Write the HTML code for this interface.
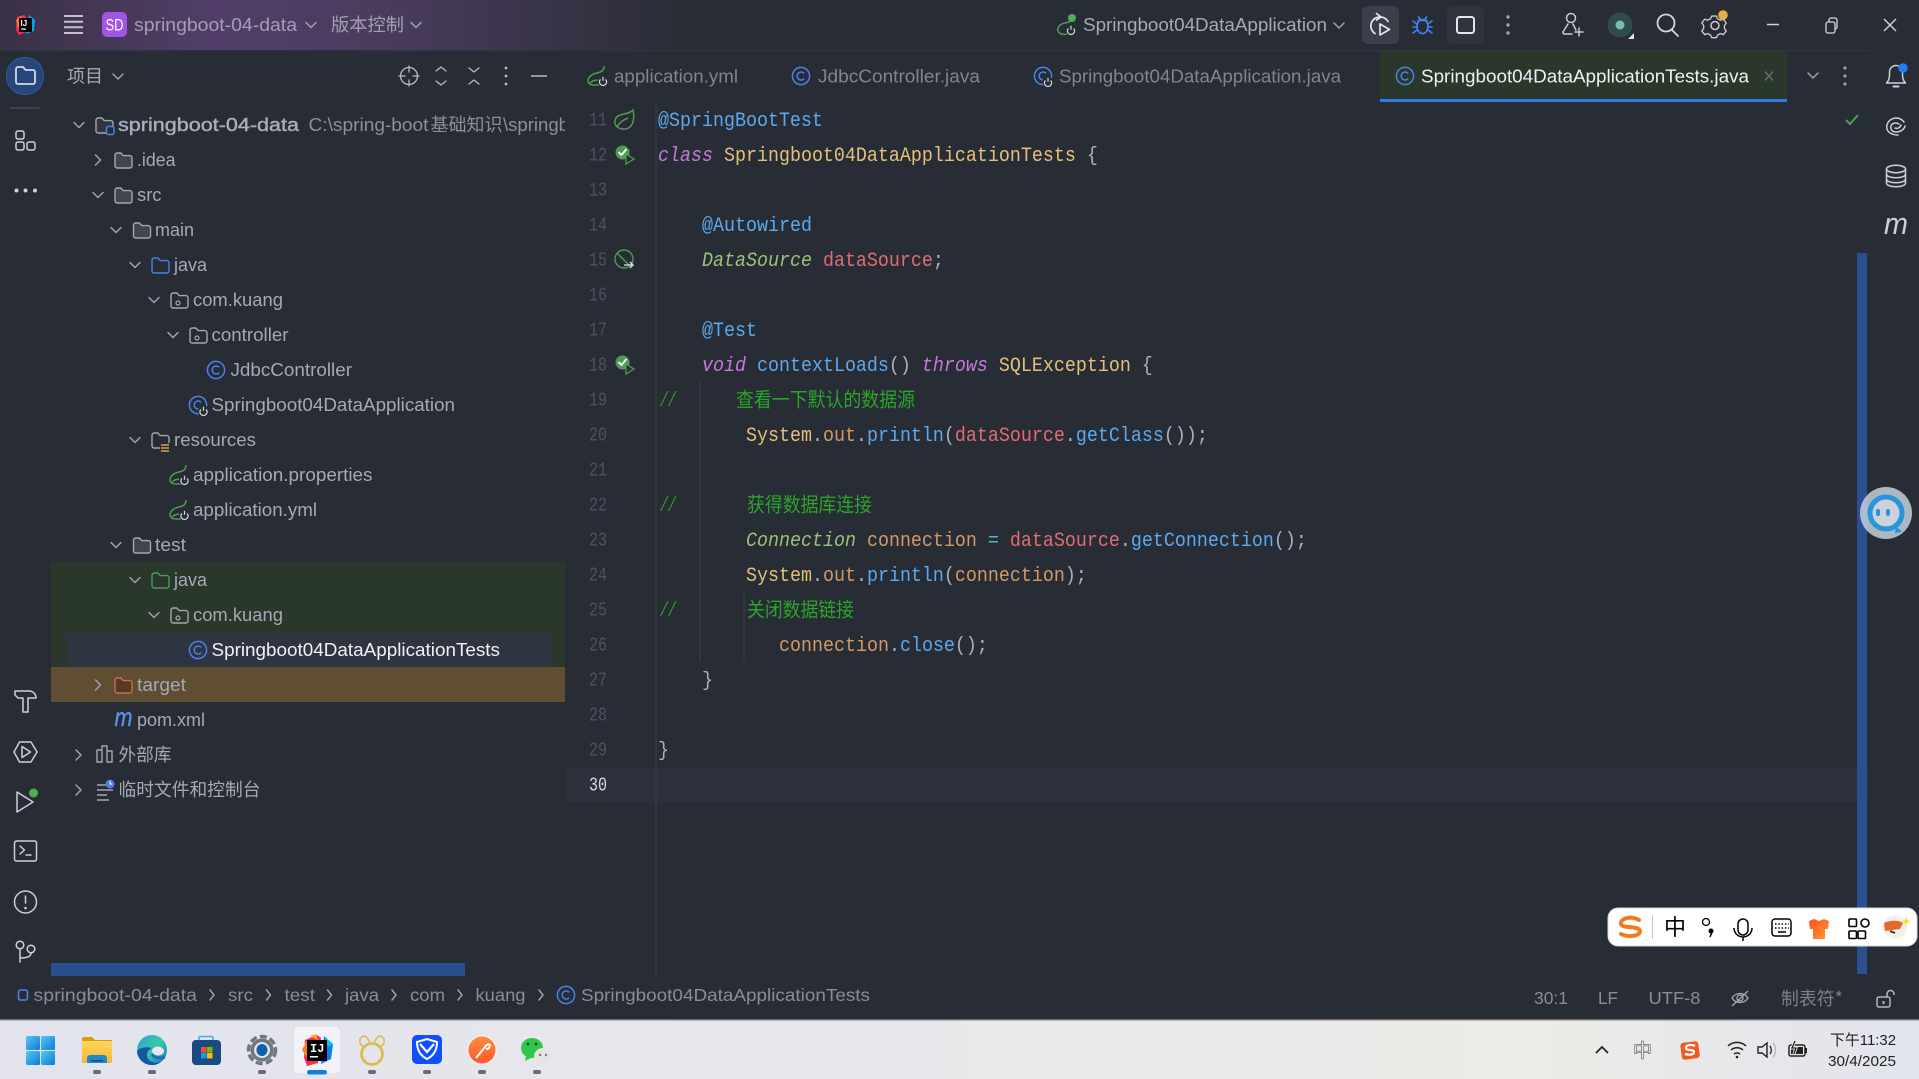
<!DOCTYPE html>
<html lang="zh"><head><meta charset="utf-8"><title>springboot-04-data</title>
<style>
html,body{margin:0;padding:0;background:#282c34;overflow:hidden}
svg{display:block}
text{white-space:pre;font-family:"Liberation Sans","Noto Sans CJK SC",sans-serif}
.t{font-size:18px;fill:#a3a9b6}
.ti{font-size:18px;fill:#a39fb2}
.tab{font-size:18px;fill:#7f8591}
.cj{font-family:"Noto Sans CJK SC",sans-serif;font-size:18px;fill:#a3a9b6}
.n{font-family:"Liberation Mono",monospace;font-size:19px;fill:#4b5263}
.code text{font-family:"Liberation Mono",monospace;font-size:20px;fill:#abb2bf}
.b{fill:#5ca9ed}.p{fill:#c678dd;font-style:italic}.y{fill:#e5c07b}.r{fill:#e06c75}.g{fill:#98c379;font-style:italic}.o{fill:#d19a66}.h{fill:#56b6c2}
.c{font-family:"Noto Sans CJK SC",sans-serif;font-size:20px;fill:#2aa52a}
.sl{font-family:"Liberation Mono",monospace;font-size:20px;font-style:italic;fill:#2aa52a}
.st{font-size:17.5px;fill:#868d9b}
.s{fill:none;stroke:#ced0d6;stroke-width:1.5;stroke-linecap:round;stroke-linejoin:round}
.ch{fill:none;stroke:#9da2ad;stroke-width:1.5;stroke-linecap:round;stroke-linejoin:round}
</style></head><body>
<svg xmlns="http://www.w3.org/2000/svg" width="1919" height="1079" viewBox="0 0 1919 1079">
<defs>
<linearGradient id="tg" x1="0" x2="1" y1="0" y2="0"><stop offset="0" stop-color="#3a3145"/><stop offset=".3" stop-color="#503e68"/><stop offset=".55" stop-color="#4a3b5e"/><stop offset="1" stop-color="#282c34"/></linearGradient>
<linearGradient id="bar" x1="0" x2="1" y1="0" y2="0"><stop offset="0" stop-color="#e2e3ec"/><stop offset=".45" stop-color="#e8e8ec"/><stop offset=".8" stop-color="#ecebe6"/><stop offset="1" stop-color="#e2e4ee"/></linearGradient>
<linearGradient id="win" x1="0" x2="1" y1="0" y2="1"><stop offset="0" stop-color="#56c8f8"/><stop offset="1" stop-color="#0f78d8"/></linearGradient>
<linearGradient id="fold" x1="0" x2="0" y1="0" y2="1"><stop offset="0" stop-color="#ffd75e"/><stop offset="1" stop-color="#f8b82e"/></linearGradient>
<linearGradient id="edge" x1="0" x2="1" y1="0" y2="1"><stop offset="0" stop-color="#2f9fd8"/><stop offset=".5" stop-color="#38c8a8"/><stop offset="1" stop-color="#1a70c0"/></linearGradient>
<linearGradient id="post" x1="0" x2="0" y1="0" y2="1"><stop offset="0" stop-color="#ff8a40"/><stop offset="1" stop-color="#fb5a28"/></linearGradient>
<linearGradient id="shirt" x1="0" x2="1" y1="0" y2="1"><stop offset="0" stop-color="#ff5020"/><stop offset="1" stop-color="#ff9a30"/></linearGradient>
<path id="fo" d="M1 3.2A2.2 2.2 0 0 1 3.2 1h3.6l2.4 2.600h6.600A2.2 2.2 0 0 1 18 5.800v8A2.2 2.2 0 0 1 15.800 16H3.2A2.2 2.2 0 0 1 1 13.800z"/>
<g id="cl" fill="none" stroke="#4a80e8" stroke-width="1.5"><circle r="8.6"/><path d="M3.2 -2.6a4 4 0 1 0 0 5.2"/></g>
<g id="pw"><circle r="5.5" fill="#282c34"/><path d="M-2.6 -1.6a3.6 3.6 0 1 0 5.2 0M0 -4.2V-.2" stroke="#d5d8de" fill="none" stroke-width="1.2"/></g>
<path id="lf" fill="none" stroke="#4f9a55" stroke-width="1.5" d="M7 -10C7 -5 4 -4 0 -3C-5 -2 -9 1 -9 5C-9 8 -6 9 -3 9H2M-7 7C-4 4 0 4 3 4"/>
</defs>

<rect width="1919" height="1079" fill="#282c34"/>

<!-- title bar -->
<rect width="700" height="50" fill="url(#tg)"/>
<rect y="50" width="1870" height="1" fill="#303540"/>
<g>
<path d="M17 17l7-2 3 3-1 14-7 3-3-5z" fill="#fe2857"/><path d="M16 20l5-4 3 6-6 6z" fill="#fc801d"/><path d="M29 15l6 5-1 11-8 3z" fill="#07a3f2"/>
<rect x="19" y="18" width="13" height="14" fill="#000"/><text x="20.500" y="26" style="font-size:8px;font-weight:bold;fill:#fff">IJ</text><rect x="21" y="28.500" width="5" height="1.200" fill="#fff"/>
</g>
<path d="M64 16H83M64 21.700H83M64 27.300H83M64 33H83" stroke="#c4c0cc" stroke-width="2"/>
<rect x="102" y="12" width="25" height="25" rx="5" fill="#a155e0"/>
<text x="105.500" y="30.500" textLength="18" lengthAdjust="spacingAndGlyphs" style="font-size:17px;fill:#fff">SD</text>
<text class="ti" x="134" y="31" textLength="163" lengthAdjust="spacingAndGlyphs">springboot-04-data</text>
<path class="ch" d="M306 22.500l5 5 5-5M411 22.500l5 5 5-5"/>
<text class="cj" x="331" y="31" textLength="73" lengthAdjust="spacingAndGlyphs" style="fill:#a39fb2">版本控制</text>

<!-- run config -->
<path d="M1073 18C1072 22 1068 22 1065 23C1060 24 1057 27 1058 31C1059 34 1063 35 1067 34" fill="none" stroke="#4f9a55" stroke-width="1.5"/>
<circle cx="1072" cy="18" r="4" fill="#4caf50"/>
<use href="#pw" x="1071" y="30"/>
<text class="t" x="1083" y="31" textLength="244" lengthAdjust="spacingAndGlyphs">Springboot04DataApplication</text>
<path class="ch" d="M1334 23l5 5 5-5"/>
<rect x="1362" y="6" width="37" height="38" rx="6" fill="#3a3f4b"/>
<g fill="none" stroke="#e3e5ea" stroke-width="1.700" stroke-linecap="round" stroke-linejoin="round"><path d="M1381 17A9 9 0 0 0 1375 33.500M1381 17a9 9 0 0 1 7 4.500M1376.500 13.500l4.500 3.500-4.500 3"/><path d="M1380 24l9.500 5.500-9.500 5.500z"/></g>
<g fill="none" stroke="#3b86f5" stroke-width="1.600" stroke-linecap="round"><ellipse cx="1422.500" cy="26.500" rx="5.500" ry="7"/><path d="M1418.500 17l2 3M1426.500 17l-2 3M1418 20.500h9M1413 21l4 3M1432 21l-4 3M1413 27h4M1432 27h-4M1413 33l4-3M1432 33l-4-3"/></g>
<rect x="1447" y="6" width="37" height="38" rx="6" fill="#2f343f"/>
<rect x="1457" y="17" width="17" height="16" rx="2.500" fill="none" stroke="#e3e5ea" stroke-width="2"/>
<g fill="#9da2ad"><circle cx="1508" cy="17" r="1.700"/><circle cx="1508" cy="25" r="1.700"/><circle cx="1508" cy="33" r="1.700"/></g>
<g class="s" style="stroke:#c9ccd2"><circle cx="1571" cy="18" r="4.500"/><path d="M1573 24l3 6M1568 24l-5 8a2 2 0 0 0 1 2h8"/><path d="M1579 28v8M1575 32h8"/></g>
<circle cx="1620" cy="25" r="12.500" fill="#2f4b4e"/><circle cx="1620" cy="25" r="4.500" fill="#74c0b0"/><path d="M1634 33v6h-6z" fill="#dfe1e5"/>
<g class="s" style="stroke:#d5d7dc;stroke-width:1.800"><circle cx="1666" cy="23" r="8.500"/><path d="M1672 30l6 6"/></g>
<g fill="none" stroke="#c9ccd2" stroke-width="1.500"><path d="M1712 15l5 0 1.500 3 3 1.500 3.500-1 3 4-2 3v3l2 3-3 4-3.500-1-3 1.500-1.500 3h-5l-1.500-3-3-1.500-3.500 1-3-4 2-3v-3l-2-3 3-4 3.500 1 3-1.500z" transform="translate(171 2.600) scale(.9)"/><circle cx="1715" cy="25.500" r="4"/></g>
<circle cx="1723" cy="15" r="4.800" fill="#e8b040"/>
<path d="M1767 24.500h12" stroke="#d5d7dc" stroke-width="1.500"/>
<g fill="none" stroke="#d5d7dc" stroke-width="1.300"><rect x="1826" y="22" width="9" height="11" rx="2"/><path d="M1829 22v-2a2 2 0 0 1 2-2h4a2 2 0 0 1 2 2v7a2 2 0 0 1-2 2"/></g>
<path d="M1884 19l12 12M1896 19l-12 12" stroke="#d5d7dc" stroke-width="1.400"/>

<!-- left stripe -->
<rect x="6.500" y="57.500" width="37" height="37" rx="18" fill="#26467c" stroke="#2f5a9e"/>
<g transform="translate(15 66)" fill="none" stroke="#d5d9e0" stroke-width="1.800"><path d="M1 3A2 2 0 0 1 3 1h5l2.500 3H18a2 2 0 0 1 2 2v10a2 2 0 0 1-2 2H3a2 2 0 0 1-2-2z"/></g>
<rect x="10" y="107" width="30" height="2" rx="1" fill="#3d424d"/>
<g class="s"><rect x="16" y="131" width="8" height="8" rx="2"/><rect x="16" y="142" width="8" height="8" rx="2"/><rect x="27" y="142" width="8" height="8" rx="2"/></g>
<g fill="#ced0d6"><circle cx="16.500" cy="190.500" r="2"/><circle cx="25.500" cy="190.500" r="2"/><circle cx="35" cy="190.500" r="2"/></g>
<g class="s"><path d="M15 691H29C33 691 36 694 36 698H28V712H23V698H18L15 695z"/></g>
<g class="s"><path d="M14 752L19.500 742H31L37 752L31 762H19.500z"/><path d="M22 746.500L30.500 752L22 757.500z"/></g>
<g class="s"><path d="M17 792L33 802L17 812z"/></g><circle cx="33.500" cy="793" r="4.500" fill="#4caf50"/>
<g class="s"><rect x="14.500" y="841" width="22" height="20" rx="2"/><path d="M20 846l4.500 4-4.500 4M26 855h5"/></g>
<g class="s"><circle cx="25.500" cy="902" r="11"/><path d="M25.500 896v7"/></g><circle cx="25.500" cy="908" r="1.300" fill="#ced0d6"/>
<g class="s"><circle cx="20" cy="945" r="3.800"/><circle cx="31" cy="949" r="3.800"/><path d="M20 949v13M31 953c0 4-5 5-11 5"/></g>

<!-- project panel header -->
<text class="cj" x="67" y="82.500" textLength="36" lengthAdjust="spacingAndGlyphs">项目</text>
<path class="ch" d="M113 74l5 5 5-5"/>
<g class="s" style="stroke:#b8bbc2;stroke-width:1.300"><circle cx="409" cy="76" r="8.500"/><path d="M409 66v6M409 80v6M399 76h6M413 76h6"/></g>
<path class="s" style="stroke:#b8bbc2;stroke-width:1.300" d="M436 71l5-4 5 4M436 81l5 4 5-4"/>
<path class="s" style="stroke:#b8bbc2;stroke-width:1.300" d="M469 68l5 4 5-4M469 84l5-4 5 4"/>
<g fill="#b8bbc2"><circle cx="506" cy="68" r="1.400"/><circle cx="506" cy="76" r="1.400"/><circle cx="506" cy="84" r="1.400"/></g>
<path d="M531 76h16" stroke="#b8bbc2" stroke-width="1.500"/>

<!-- tree highlights -->
<rect x="51" y="562" width="514" height="105" fill="#29382b"/>
<rect x="66.500" y="633" width="484" height="34" rx="5" fill="#2f3441"/>
<rect x="51" y="667" width="514" height="35" fill="#5f4e32"/>

<!-- chevrons -->
<g class="ch">
<path d="M74 122.500l5 5 5-5"/>
<path d="M95.500 155l5 5-5 5"/>
<path d="M93 192.500l5 5 5-5"/>
<path d="M111 227.500l5 5 5-5"/>
<path d="M130 262.500l5 5 5-5"/>
<path d="M149 297.500l5 5 5-5"/>
<path d="M168 332.500l5 5 5-5"/>
<path d="M130 437.500l5 5 5-5"/>
<path d="M111 542.500l5 5 5-5"/>
<path d="M130 577.500l5 5 5-5"/>
<path d="M149 612.500l5 5 5-5"/>
<path d="M95.500 680l5 5-5 5"/>
<path d="M76 750l5 5-5 5"/>
<path d="M76 785l5 5-5 5"/>
</g>

<!-- tree icons -->
<g fill="#43454a" stroke="#a4a7ae" stroke-width="1.400">
<use href="#fo" x="95" y="117" fill="#32353c"/>
<use href="#fo" x="114" y="152"/>
<use href="#fo" x="114" y="187"/>
<use href="#fo" x="132.500" y="222"/>
<use href="#fo" x="151" y="257" fill="none" stroke="#4a80e8"/>
<use href="#fo" x="170" y="292" fill="none"/>
<use href="#fo" x="189" y="327" fill="none"/>
<use href="#fo" x="151" y="432" fill="none"/>
<use href="#fo" x="132.500" y="537"/>
<use href="#fo" x="151" y="572" fill="none" stroke="#4f9a55"/>
<use href="#fo" x="170" y="607" fill="none"/>
<use href="#fo" x="114" y="677" fill="#5a3828" stroke="#c4714d"/>
</g>
<rect x="106.500" y="126.500" width="7.500" height="8" rx="2" fill="#282c34" stroke="#4a80e8" stroke-width="1.500"/>
<g fill="none" stroke="#a4a7ae" stroke-width="1.200"><circle cx="178" cy="303" r="2"/><circle cx="197" cy="338" r="2"/><circle cx="178" cy="618" r="2"/></g>
<rect x="160" y="443" width="10" height="9" fill="#282c34"/><path d="M161 445h8M161 448h8M161 451h8" stroke="#d5a93a" stroke-width="1.500"/>
<use href="#cl" x="216" y="370"/>
<use href="#cl" x="198" y="405"/><use href="#pw" x="203.500" y="411"/>
<use href="#lf" x="179" y="475"/><use href="#pw" x="184.500" y="480"/>
<use href="#lf" x="179" y="510"/><use href="#pw" x="184.500" y="515"/>
<use href="#cl" x="198" y="650"/>
<text x="114.500" y="726" style="font-style:italic;font-size:26px;fill:#5b8ff0;stroke:#5b8ff0;stroke-width:.4" textLength="18" lengthAdjust="spacingAndGlyphs">m</text>
<g fill="none" stroke="#a4a7ae" stroke-width="1.400"><path d="M97 750h5v12h-5zM102 762V746h5v16M107 762V751h5v11z"/></g>
<path d="M97 785h10M97 790h16M97 795h10M97 800h12" stroke="#a4a7ae" stroke-width="1.500"/>
<circle cx="110" cy="784" r="4.500" fill="#4a80e8"/><path d="M110 781v3h2" stroke="#fff" fill="none"/>

<!-- tree text -->
<text class="t" x="118" y="131" textLength="181" lengthAdjust="spacingAndGlyphs" style="fill:#a8aebb;stroke:#a8aebb;stroke-width:.4">springboot-04-data</text>
<text class="t" x="308.500" y="131" textLength="120" lengthAdjust="spacingAndGlyphs" style="fill:#8a909c">C:\spring-boot</text>
<text class="cj" x="430.500" y="131" textLength="72" lengthAdjust="spacingAndGlyphs" style="fill:#8a909c">基础知识</text>
<text class="t" x="503" y="131" textLength="66" lengthAdjust="spacingAndGlyphs" style="fill:#8a909c">\springb</text>
<rect x="565" y="102" width="90" height="60" fill="#282c34"/>
<text class="t" x="137" y="166" textLength="38.500" lengthAdjust="spacingAndGlyphs">.idea</text>
<text class="t" x="137" y="201" textLength="24.500" lengthAdjust="spacingAndGlyphs">src</text>
<text class="t" x="155" y="236" textLength="39" lengthAdjust="spacingAndGlyphs">main</text>
<text class="t" x="174" y="271" textLength="33" lengthAdjust="spacingAndGlyphs">java</text>
<text class="t" x="193" y="306" textLength="90" lengthAdjust="spacingAndGlyphs">com.kuang</text>
<text class="t" x="211.500" y="341" textLength="77" lengthAdjust="spacingAndGlyphs">controller</text>
<text class="t" x="230.500" y="376" textLength="121.500" lengthAdjust="spacingAndGlyphs">JdbcController</text>
<text class="t" x="211.500" y="411" textLength="243.500" lengthAdjust="spacingAndGlyphs">Springboot04DataApplication</text>
<text class="t" x="174" y="446" textLength="82" lengthAdjust="spacingAndGlyphs">resources</text>
<text class="t" x="193" y="481" textLength="179.500" lengthAdjust="spacingAndGlyphs">application.properties</text>
<text class="t" x="193" y="516" textLength="124" lengthAdjust="spacingAndGlyphs">application.yml</text>
<text class="t" x="155" y="551" textLength="31" lengthAdjust="spacingAndGlyphs">test</text>
<text class="t" x="174" y="586" textLength="33" lengthAdjust="spacingAndGlyphs">java</text>
<text class="t" x="193" y="621" textLength="90" lengthAdjust="spacingAndGlyphs">com.kuang</text>
<text class="t" x="211.500" y="656" textLength="288.500" lengthAdjust="spacingAndGlyphs" style="fill:#eef0f4">Springboot04DataApplicationTests</text>
<text class="t" x="137" y="691" textLength="49" lengthAdjust="spacingAndGlyphs">target</text>
<text class="t" x="137" y="726" textLength="68" lengthAdjust="spacingAndGlyphs">pom.xml</text>
<text class="cj" x="118.500" y="761" textLength="53" lengthAdjust="spacingAndGlyphs">外部库</text>
<text class="cj" x="118.500" y="796" textLength="142" lengthAdjust="spacingAndGlyphs">临时文件和控制台</text>

<!-- tabs -->
<rect x="1380" y="51" width="407" height="48" fill="#29382b"/>
<rect x="1380" y="99" width="407" height="3" fill="#2d7de8"/>
<use href="#lf" x="597" y="76"/><use href="#pw" x="603" y="81"/>
<text class="tab" x="614" y="82.500" textLength="124" lengthAdjust="spacingAndGlyphs">application.yml</text>
<use href="#cl" x="801" y="76"/>
<text class="tab" x="818" y="82.500" textLength="162" lengthAdjust="spacingAndGlyphs">JdbcController.java</text>
<use href="#cl" x="1043" y="76"/><use href="#pw" x="1048" y="82"/>
<text class="tab" x="1059" y="82.500" textLength="282" lengthAdjust="spacingAndGlyphs">Springboot04DataApplication.java</text>
<use href="#cl" x="1405" y="76"/>
<text class="t" x="1421" y="82.500" textLength="328" lengthAdjust="spacingAndGlyphs" style="fill:#eef0f4">Springboot04DataApplicationTests.java</text>
<path d="M1765 71.500l8 9M1773 71.500l-8 9" stroke="#6f757f" stroke-width="1.300"/>
<path class="ch" d="M1808 73l5 5 5-5"/>
<g fill="#9da2ad"><circle cx="1845" cy="68" r="1.600"/><circle cx="1845" cy="76" r="1.600"/><circle cx="1845" cy="84" r="1.600"/></g>

<!-- right stripe -->
<g class="s"><path d="M1886.500 83h19c-2-2-3-4-3-8v-3a6.500 6.500 0 0 0-13 0v3c0 4-1 6-3 8z"/><path d="M1893.500 86.500h5" stroke-width="2"/></g>
<circle cx="1903" cy="68" r="4.700" fill="#1f7cff"/>
<g class="s"><path d="M1904 122c-3-4-8-5-12-3c-4 2-6 6-5 10c1 4 6 6 11 6M1899 124c-3-2-7-1-8 2c-1 3 1 6 5 6c4 0 8-2 9-6M1895 128c2 1 5 0 6-3"/></g>
<g class="s"><ellipse cx="1896" cy="169" rx="9.500" ry="3.700"/><path d="M1886.500 169v14c0 5 19 5 19 0v-14M1886.500 174c0 5 19 5 19 0M1886.500 179c0 5 19 5 19 0"/></g>
<text x="1884" y="234" style="font-style:italic;font-size:31px;fill:#ced0d6" textLength="24" lengthAdjust="spacingAndGlyphs">m</text>

<!-- editor -->
<rect x="565" y="767.500" width="1303" height="35" fill="#2c313c"/>
<rect x="655.500" y="102" width="1" height="873" fill="#3a3f4b"/>
<rect x="699.500" y="382" width="1" height="280" fill="#3a3f4b"/>
<rect x="743.500" y="592" width="1" height="70" fill="#3a3f4b"/>
<path d="M1846 120l4 4 8-9" fill="none" stroke="#4f9a55" stroke-width="2"/>
<g transform="translate(0 -.5)">
<text class="n" x="589" y="126" textLength="18" lengthAdjust="spacingAndGlyphs">11</text>
<text class="n" x="589" y="161" textLength="18" lengthAdjust="spacingAndGlyphs">12</text>
<text class="n" x="589" y="196" textLength="18" lengthAdjust="spacingAndGlyphs">13</text>
<text class="n" x="589" y="231" textLength="18" lengthAdjust="spacingAndGlyphs">14</text>
<text class="n" x="589" y="266" textLength="18" lengthAdjust="spacingAndGlyphs">15</text>
<text class="n" x="589" y="301" textLength="18" lengthAdjust="spacingAndGlyphs">16</text>
<text class="n" x="589" y="336" textLength="18" lengthAdjust="spacingAndGlyphs">17</text>
<text class="n" x="589" y="371" textLength="18" lengthAdjust="spacingAndGlyphs">18</text>
<text class="n" x="589" y="406" textLength="18" lengthAdjust="spacingAndGlyphs">19</text>
<text class="n" x="589" y="441" textLength="18" lengthAdjust="spacingAndGlyphs">20</text>
<text class="n" x="589" y="476" textLength="18" lengthAdjust="spacingAndGlyphs">21</text>
<text class="n" x="589" y="511" textLength="18" lengthAdjust="spacingAndGlyphs">22</text>
<text class="n" x="589" y="546" textLength="18" lengthAdjust="spacingAndGlyphs">23</text>
<text class="n" x="589" y="581" textLength="18" lengthAdjust="spacingAndGlyphs">24</text>
<text class="n" x="589" y="616" textLength="18" lengthAdjust="spacingAndGlyphs">25</text>
<text class="n" x="589" y="651" textLength="18" lengthAdjust="spacingAndGlyphs">26</text>
<text class="n" x="589" y="686" textLength="18" lengthAdjust="spacingAndGlyphs">27</text>
<text class="n" x="589" y="721" textLength="18" lengthAdjust="spacingAndGlyphs">28</text>
<text class="n" x="589" y="756" textLength="18" lengthAdjust="spacingAndGlyphs">29</text>
<text class="n" x="589" y="791" textLength="18" lengthAdjust="spacingAndGlyphs" style="fill:#d5d8de">30</text>
</g>

<!-- gutter icons -->
<g fill="none" stroke="#4f9a55" stroke-width="1.500">
<path d="M633 110C635 119 633 129 624 129C616 129 613 123 616 118C619 113 629 115 633 110zM617 127C620 122 623 120 628 118"/>
</g>
<circle cx="622.500" cy="152.500" r="7" fill="#4f9a55"/><path d="M618.500 152l3 3 5-6" fill="none" stroke="#fff" stroke-width="1.800"/>
<path d="M626 154l8 5-8 5z" fill="#282c34" stroke="#4f9a55" stroke-width="1.300"/>
<circle cx="622.500" cy="362.500" r="7" fill="#4f9a55"/><path d="M618.500 362l3 3 5-6" fill="none" stroke="#fff" stroke-width="1.800"/>
<path d="M626 364l8 5-8 5z" fill="#282c34" stroke="#4f9a55" stroke-width="1.300"/>
<g fill="none" stroke="#4f9a55" stroke-width="1.400"><circle cx="624" cy="259" r="9"/><path d="M617 253l13 13"/></g>
<path d="M624 265h9M630 262l3 3-3 3" fill="none" stroke="#e3e5ea" stroke-width="1.300"/>

<!-- code -->
<g class="code" transform="translate(658 0) scale(.9167 1)">
<text x="0" y="126" style="fill:#5ca9ed">@SpringBootTest</text>
<text x="0" y="161"><tspan class="p">class</tspan> <tspan class="y">Springboot04DataApplicationTests</tspan> {</text>
<text x="48" y="231" style="fill:#5ca9ed">@Autowired</text>
<text x="48" y="266"><tspan class="g">DataSource</tspan> <tspan class="r">dataSource</tspan>;</text>
<text x="48" y="336" style="fill:#5ca9ed">@Test</text>
<text x="48" y="371"><tspan class="p">void</tspan> <tspan class="b">contextLoads</tspan>() <tspan class="p">throws</tspan> <tspan class="y">SQLException</tspan> {</text>
<text x="96" y="441"><tspan class="y">System</tspan>.<tspan class="o">out</tspan>.<tspan class="b">println</tspan>(<tspan class="r">dataSource</tspan>.<tspan class="b">getClass</tspan>());</text>
<text x="96" y="546"><tspan class="g">Connection</tspan> <tspan class="o">connection</tspan> <tspan class="h">=</tspan> <tspan class="r">dataSource</tspan>.<tspan class="b">getConnection</tspan>();</text>
<text x="96" y="581"><tspan class="y">System</tspan>.<tspan class="o">out</tspan>.<tspan class="b">println</tspan>(<tspan class="o">connection</tspan>);</text>
<text x="132" y="651"><tspan class="o">connection</tspan>.<tspan class="b">close</tspan>();</text>
<text x="48" y="686">}</text>
<text x="0" y="756">}</text>
</g>
<text class="sl" x="660" y="406" textLength="16" lengthAdjust="spacingAndGlyphs">//</text>
<text class="sl" x="660" y="511" textLength="16" lengthAdjust="spacingAndGlyphs">//</text>
<text class="sl" x="660" y="616" textLength="16" lengthAdjust="spacingAndGlyphs">//</text>
<text class="c" x="736" y="406.500" textLength="179" lengthAdjust="spacingAndGlyphs">查看一下默认的数据源</text>
<text class="c" x="747" y="511.500" textLength="125" lengthAdjust="spacingAndGlyphs">获得数据库连接</text>
<text class="c" x="747" y="616.500" textLength="107" lengthAdjust="spacingAndGlyphs">关闭数据链接</text>

<!-- scrollbars -->
<rect x="1857" y="253" width="10" height="721" fill="#2a5091"/>
<rect x="51" y="963" width="414" height="13" fill="#28508e"/>

<!-- floating chat -->
<circle cx="1886" cy="513" r="26" fill="#c3d0dc" opacity=".85"/>
<circle cx="1886" cy="513" r="16" fill="#cdd2da" stroke="#2795dc" stroke-width="5"/>
<path d="M1896 526l6 6-7 1z" fill="#2795dc"/>
<rect x="1876" y="509" width="4" height="7" rx="2" fill="#2795dc"/><rect x="1886" y="509" width="4" height="7" rx="2" fill="#2795dc"/>

<!-- status bar -->
<rect x="18.500" y="990" width="9" height="10" rx="2" fill="none" stroke="#4a80e8" stroke-width="1.600"/>
<text class="st" x="33.500" y="1001" textLength="163.500" lengthAdjust="spacingAndGlyphs">springboot-04-data</text>
<text class="st" x="228" y="1001" textLength="25" lengthAdjust="spacingAndGlyphs">src</text>
<text class="st" x="284.500" y="1001" textLength="30.500" lengthAdjust="spacingAndGlyphs">test</text>
<text class="st" x="345" y="1001" textLength="34" lengthAdjust="spacingAndGlyphs">java</text>
<text class="st" x="410" y="1001" textLength="35" lengthAdjust="spacingAndGlyphs">com</text>
<text class="st" x="475.500" y="1001" textLength="50" lengthAdjust="spacingAndGlyphs">kuang</text>
<text class="st" x="581" y="1001" textLength="289" lengthAdjust="spacingAndGlyphs">Springboot04DataApplicationTests</text>
<g class="ch"><path d="M210 990l4 5-4 5M266.500 990l4 5-4 5M327.500 990l4 5-4 5M392 990l4 5-4 5M458 990l4 5-4 5M539 990l4 5-4 5"/></g>
<use href="#cl" x="566" y="995"/>
<text class="st" x="1534" y="1004" textLength="34" lengthAdjust="spacingAndGlyphs">30:1</text>
<text class="st" x="1598" y="1004" textLength="20" lengthAdjust="spacingAndGlyphs">LF</text>
<text class="st" x="1648.500" y="1004" textLength="52" lengthAdjust="spacingAndGlyphs">UTF-8</text>
<g fill="none" stroke="#a3a9b6" stroke-width="1.300"><path d="M1732 998c4-6 12-6 16 0c-4 6-12 6-16 0zM1732 1006l16-15"/><circle cx="1740" cy="998" r="3"/></g>
<text class="cj" x="1781" y="1005" textLength="62" lengthAdjust="spacingAndGlyphs" style="fill:#7b818d">制表符*</text>
<g fill="none" stroke="#b4b9c2" stroke-width="1.500"><rect x="1877" y="997" width="13" height="10" rx="2"/><path d="M1887 997v-3a3.500 3.500 0 0 1 7 0v1"/></g>
<rect x="1882.500" y="1001" width="2" height="3" fill="#b4b9c2"/>

<!-- sogou bar -->
<rect x="1608" y="908" width="309" height="38" rx="10" fill="#fff" stroke="#d8d8d8"/>
<path d="M1639 920C1630 915 1620 919 1621 924C1622 929 1639 925 1640 931C1640 937 1627 937 1621 934" fill="none" stroke="#f07a20" stroke-width="4" stroke-linecap="round"/>
<rect x="1652" y="915" width="1" height="24" fill="#c8c8c8"/>
<text class="cj" x="1664" y="935" style="font-size:22px;fill:#000">中</text>
<circle cx="1706" cy="922" r="3.500" fill="none" stroke="#000" stroke-width="1.300"/><circle cx="1711" cy="931" r="2.500" fill="#000"/><path d="M1712 932l-2 5" stroke="#000" stroke-width="1.500"/>
<g fill="none" stroke="#000" stroke-width="1.500"><rect x="1738" y="919" width="10" height="16" rx="5"/><path d="M1734 928a9 9 0 0 0 18 0M1743 937v4"/></g>
<rect x="1772" y="919" width="19" height="17" rx="3" fill="none" stroke="#000" stroke-width="1.500"/><path d="M1775 924h14M1775 928h14" stroke="#000" stroke-width="1.600" stroke-dasharray="1.500 1.800"/><path d="M1778 932h8" stroke="#000" stroke-width="1.500"/>
<path d="M1809 921l5-2 5 2 5-2 5 2-1 8h-3v10h-12v-10h-3z" fill="url(#shirt)"/>
<g fill="none" stroke="#000" stroke-width="1.600"><rect x="1849" y="919" width="7.500" height="7.500" rx="1"/><circle cx="1865" cy="923" r="4"/><rect x="1849" y="931" width="7.500" height="7.500" rx="1"/><rect x="1858" y="931" width="7.500" height="7.500" rx="1"/></g>
<circle cx="1895" cy="927" r="12" fill="#f5f0ea"/><path d="M1884 923c6-3 15-3 19 0l-3 6-15 2z" fill="#e8682a"/><path d="M1890 931l5 2" stroke="#333" stroke-width="2"/>
<path d="M1906 917l1.500 3 3 1.500-3 1.500-1.500 3-1.500-3-3-1.500 3-1.500z" fill="#f8df50"/>

<!-- taskbar -->
<rect y="1020" width="1919" height="59" fill="url(#bar)"/>
<rect y="1019.500" width="1919" height="1.500" fill="#b5b5ba"/>
<g fill="url(#win)"><rect x="26" y="1036" width="14" height="14" rx="1.500"/><rect x="41" y="1036" width="14" height="14" rx="1.500"/><rect x="26" y="1051" width="14" height="14" rx="1.500"/><rect x="41" y="1051" width="14" height="14" rx="1.500"/></g>
<path d="M82 1040a2 2 0 0 1 2-3h8l3 3h17v4H82z" fill="#d8a008"/><rect x="82" y="1041" width="30" height="22" rx="1" fill="url(#fold)"/>
<path d="M87 1063v-5a3 3 0 0 1 3-3h14a3 3 0 0 1 3 3v5z" fill="#1f86d0"/><rect x="91" y="1060" width="12" height="1.500" fill="#0b4f90"/>
<circle cx="152" cy="1050" r="15" fill="url(#edge)"/><path d="M137 1052a15 15 0 0 0 24 10c-6 2-14 0-14-7c0-4 3-6 5-7c-7-2-14 0-15 4z" fill="#14599f"/><ellipse cx="158" cy="1051" rx="6" ry="4.500" fill="#e6e6ec"/><path d="M152 1054c2 4 8 5 13 3" stroke="#1a70c0" stroke-width="3" fill="none"/>
<path d="M199 1041v-3a1.500 1.500 0 0 1 1.500-1.500h11a1.500 1.500 0 0 1 1.500 1.500v3" fill="none" stroke="#2fb6f0" stroke-width="1.600"/>
<rect x="192" y="1040" width="29" height="25" rx="4" fill="#1b4a80"/>
<rect x="201" y="1047" width="5.500" height="5.500" fill="#f05030"/><rect x="207" y="1047" width="5.500" height="5.500" fill="#7fba00"/><rect x="201" y="1053" width="5.500" height="5.500" fill="#00a4ef"/><rect x="207" y="1053" width="5.500" height="5.500" fill="#ffb900"/>
<circle cx="262" cy="1050" r="11.500" fill="#6f7780"/><circle cx="262" cy="1050" r="13.500" fill="none" stroke="#6f7780" stroke-width="3.500" stroke-dasharray="7 3.200"/><circle cx="262" cy="1050" r="8" fill="#e4e5ec"/><ellipse cx="262" cy="1050" rx="5.500" ry="6" fill="#0f5fb0"/>

<rect x="293" y="1026" width="48" height="48" rx="5" fill="#f2f2f9" stroke="#dcdce6"/>
<path d="M305 1040l12-5 4 3-3 25-11 3-3-8z" fill="#fe2857"/><path d="M302 1050l5-10 8 10-7 9z" fill="#fc801d"/><path d="M324 1036l9 8-2 15-10 5z" fill="#087cfa"/><path d="M324 1036l9 8-5 3z" fill="#07c3f2"/><path d="M310 1036l6-2 2 6z" fill="#fdb60d"/>
<rect x="307" y="1040" width="20" height="21" fill="#000"/>
<text x="310" y="1052" style="font-size:12px;font-weight:bold;fill:#fff;font-family:'Liberation Mono',monospace">IJ</text><rect x="310" y="1056" width="8" height="1.500" fill="#fff"/>

<circle cx="372" cy="1054" r="10.500" fill="none" stroke="#d8bc50" stroke-width="2.800"/>
<path d="M364 1047c-6-3-5-9-1-11c4 0 6 4 7 8M380 1047c6-3 5-9 1-11c-4 0-6 4-7 8" fill="none" stroke="#dcc25e" stroke-width="1.800"/>
<rect x="412" y="1035" width="30" height="29" rx="5" fill="#0f4fff"/>
<path d="M417 1042l10-3 10 3c0 9-4 14-10 17c-6-3-10-8-10-17z" fill="none" stroke="#fff" stroke-width="2"/><path d="M420 1044l7 8 7-8" fill="none" stroke="#fff" stroke-width="2.200"/>
<circle cx="482" cy="1050" r="15" fill="#f5f0ec"/><circle cx="482" cy="1050" r="13.500" fill="url(#post)"/>
<path d="M476 1058l9-11M485 1047c2-3 4-3 5-2c0 2-1 4-4 4" stroke="#fff" stroke-width="2" fill="none"/>
<ellipse cx="532" cy="1048" rx="11" ry="10" fill="#2dc84d"/><path d="M526 1056l-1 5 6-3z" fill="#2dc84d"/>
<circle cx="528" cy="1044" r="1.400" fill="#17402a"/><circle cx="536" cy="1044" r="1.400" fill="#17402a"/>
<ellipse cx="543" cy="1056" rx="9" ry="8" fill="#e4e4e2"/><circle cx="540" cy="1055" r="1.200" fill="#777"/><circle cx="546" cy="1055" r="1.200" fill="#777"/>
<g fill="#6a6a70"><rect x="93" y="1070" width="8" height="4" rx="2"/><rect x="148" y="1070" width="8" height="4" rx="2"/><rect x="258" y="1070" width="8" height="4" rx="2"/><rect x="368" y="1070" width="8" height="4" rx="2"/><rect x="423" y="1070" width="8" height="4" rx="2"/><rect x="478" y="1070" width="8" height="4" rx="2"/><rect x="533" y="1070" width="8" height="4" rx="2"/></g>
<rect x="307" y="1070" width="20" height="4.500" rx="2.200" fill="#0f7fd8"/>

<!-- tray -->
<path d="M1596 1053l6-6 6 6" fill="none" stroke="#222" stroke-width="1.800"/>
<text class="cj" x="1633" y="1057" style="font-size:19px;fill:#f4f4f4;stroke:#333;stroke-width:.5">中</text>
<rect x="1681" y="1042" width="18" height="17" rx="3" fill="#f05a20" transform="rotate(-8 1690 1050)"/>
<path d="M1695 1046c-4-2-9-1-9 2c0 3 8 1 8 4c0 3-5 3-9 2" fill="none" stroke="#fff" stroke-width="2.200"/>
<g fill="none" stroke="#222" stroke-width="1.500"><path d="M1728 1046a13 13 0 0 1 18 0M1731 1050a9 9 0 0 1 12 0M1734 1054a5 5 0 0 1 6 0"/></g><circle cx="1737" cy="1057" r="1.300" fill="#222"/>
<g fill="none" stroke="#222" stroke-width="1.400"><path d="M1758 1047h4l5-4v14l-5-4h-4z"/><path d="M1770 1046a7 7 0 0 1 0 8"/></g><path d="M1773 1043a11 11 0 0 1 0 14" fill="none" stroke="#b5b5b5" stroke-width="1.300"/>
<rect x="1789" y="1045" width="16" height="11" rx="2" fill="none" stroke="#222" stroke-width="1.500"/><rect x="1791" y="1047" width="12" height="7" fill="#222"/><rect x="1805" y="1048" width="2" height="5" fill="#222"/><path d="M1795 1041l-3 7h4l-2 6" stroke="#f0eee8" stroke-width="3" fill="none"/><path d="M1795 1041l-3 7h4l-2 6" stroke="#222" stroke-width="1.300" fill="none"/>
<text x="1830" y="1045" textLength="66" lengthAdjust="spacingAndGlyphs" style="font-size:15px;fill:#222">下午11:32</text>
<text x="1828" y="1066" textLength="68" lengthAdjust="spacingAndGlyphs" style="font-size:15px;fill:#222">30/4/2025</text>
</svg>
</body></html>
